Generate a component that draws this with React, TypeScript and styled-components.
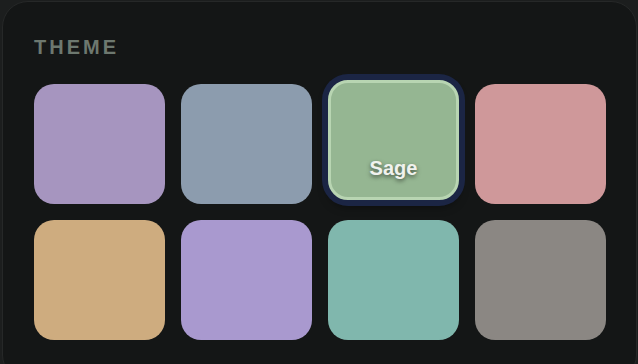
import styled, { createGlobalStyle } from "styled-components";

const GlobalStyle = createGlobalStyle`
    html, body {
        margin: 0;
        padding: 0;
        background-color: #1c1e1e;
        font-family: "Liberation Sans", Arial, sans-serif;
    }
`

const Panel = styled.div`
    box-sizing: border-box;
    margin: 1px 0 0 2px;
    width: 635px;
    height: 380px;
    background-color: #141616;
    border: 1px solid #262828;
    border-radius: 26px;
    padding: 33px 30px 0 31px;
`

const Title = styled.div`
    color: #6d786f;
    font-size: 20px;
    font-weight: 700;
    letter-spacing: 3px;
    line-height: 24px;
    margin-bottom: 25px;
`

const Grid = styled.div`
    display: grid;
    grid-template-columns: repeat(4, 131px);
    grid-auto-rows: 120px;
    gap: 16px;
`

const Swatch = styled.div<{ $color: string; $selected?: boolean }>`
    box-sizing: border-box;
    background-color: ${p => p.$color};
    border-radius: 20px;
    display: flex;
    align-items: flex-end;
    justify-content: center;
    padding-bottom: 17px;
    ${p => p.$selected && `
        border: 3px solid #b8d5b2;
        transform: translateY(-4px);
        box-shadow: 0 0 0 6px #1b2544, 0 6px 10px rgba(0, 0, 0, 0.5);
    `}
`

const Label = styled.span`
    color: #f0f2ee;
    font-size: 20px;
    font-weight: 700;
    text-shadow: 0 2px 4px rgba(0, 0, 0, 0.55);
`

const themes = [
    { name: "Lavender", color: "#a695bf" },
    { name: "Slate", color: "#8c9cae" },
    { name: "Sage", color: "#95b692" },
    { name: "Rose", color: "#cf989a" },
    { name: "Sand", color: "#ceac7f" },
    { name: "Lilac", color: "#a999cf" },
    { name: "Teal", color: "#80b7ad" },
    { name: "Stone", color: "#8b8783" },
]

export default function App() {
    const selected = "Sage";
    return (
        <>
            <GlobalStyle />
            <Panel>
                <Title>THEME</Title>
                <Grid>
                    {themes.map(t => (
                        <Swatch key={t.name} $color={t.color} $selected={t.name === selected}>
                            {t.name === selected && <Label>{t.name}</Label>}
                        </Swatch>
                    ))}
                </Grid>
            </Panel>
        </>
    )
}
